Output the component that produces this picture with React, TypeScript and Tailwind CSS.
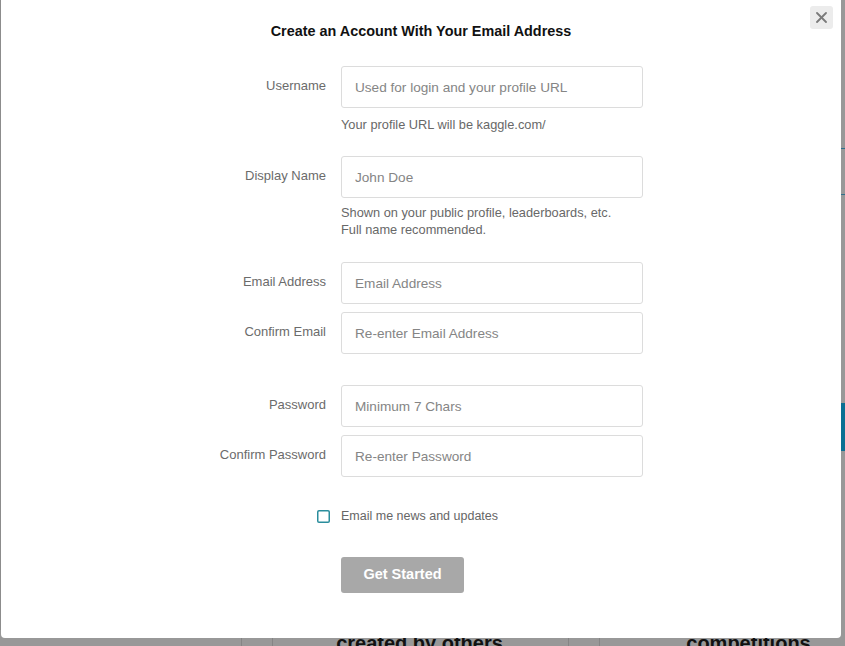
import React from 'react';

interface FieldProps {
  label: string;
  placeholder: string;
  type?: string;
  className?: string;
  help?: string[];
  helpClassName?: string;
}

const Field = ({ label, placeholder, type = 'text', className = '', help, helpClassName = '' }: FieldProps) => (
  <div className={className}>
    <div className="flex items-center gap-[15px]">
      <label className="w-[127px] shrink-0 pb-[3px] text-right text-[13px] leading-[17px] text-[#6b6b6b]">{label}</label>
      <input
        type={type}
        placeholder={placeholder}
        className="h-[42px] w-[302px] rounded-[3px] border border-[#dcdcdc] bg-white px-[13px] text-[13.6px] text-[#555] outline-none placeholder:text-[#858585]"
      />
    </div>
    {help && (
      <div className={`ml-[142px] text-[12.8px] leading-[17px] text-[#686868] ${helpClassName}`}>
        {help.map((line) => (
          <p key={line}>{line}</p>
        ))}
      </div>
    )}
  </div>
);

const CloseButton = () => (
  <button className="flex h-[23px] w-[23px] items-center justify-center rounded-[3px] bg-[#ececec]">
    <svg width="11" height="11" viewBox="0 0 11 11" fill="none" stroke="#7a7a7a" strokeWidth="1.8" strokeLinecap="round">
      <line x1="1" y1="1" x2="10" y2="10" />
      <line x1="10" y1="1" x2="1" y2="10" />
    </svg>
  </button>
);

// page behind the overlay, dimmed
const BackgroundPage = () => (
  <div className="flex h-full w-full flex-col bg-[#989898]">
    <div className="flex h-[630px] shrink-0 justify-between">
      <div className="flex w-px flex-col bg-[#8c8c8c]" />
      <div className="flex w-[4px] flex-col">
        <div className="mt-[148px] h-px bg-[#2f6f8c]" />
        <div className="mt-[45px] h-px bg-[#2f6f8c]" />
        <div className="mt-[208px] h-[48px] bg-[#0b6f93]" />
      </div>
    </div>
    <div className="flex h-[16px] shrink-0 overflow-hidden">
      <div className="ml-[241px] w-px shrink-0 bg-[#858585]" />
      <div className="ml-[30px] flex w-[297px] shrink-0 justify-center border-l border-r border-[#858585] pr-[2px]">
        <span className="mt-[1px] text-[20px] font-bold leading-[24px] text-[#111]">created by others</span>
      </div>
      <div className="ml-[30px] flex w-[298px] shrink-0 justify-center border-l border-[#858585]">
        <span className="mt-[1px] text-[20px] font-bold leading-[24px] text-[#111]">competitions</span>
      </div>
    </div>
  </div>
);

export default function App() {
  return (
    <div className="relative h-[646px] w-[845px] overflow-hidden font-['Liberation_Sans',Arial,sans-serif]">
      <BackgroundPage />

      <div className="absolute left-px top-0 flex h-[638px] w-[840px] flex-col items-center rounded-b-[4px] bg-white">
        <div className="absolute right-[8px] top-[6px]">
          <CloseButton />
        </div>

        <h1 className="mt-[23px] text-[14.4px] font-bold leading-[16px] text-[#111]">
          Create an Account With Your Email Address
        </h1>

        <form className="mt-[27px] flex w-[444px] flex-col" onSubmit={(e) => e.preventDefault()}>
          <Field
            label="Username"
            placeholder="Used for login and your profile URL"
            help={['Your profile URL will be kaggle.com/']}
            helpClassName="mt-[8px]"
          />
          <Field
            className="mt-[23px]"
            label="Display Name"
            placeholder="John Doe"
            help={['Shown on your public profile, leaderboards, etc.', 'Full name recommended.']}
            helpClassName="mt-[6px]"
          />
          <Field className="mt-[24px]" label="Email Address" placeholder="Email Address" type="email" />
          <Field className="mt-[8px]" label="Confirm Email" placeholder="Re-enter Email Address" type="email" />
          <Field className="mt-[31px]" label="Password" placeholder="Minimum 7 Chars" type="password" />
          <Field className="mt-[8px]" label="Confirm Password" placeholder="Re-enter Password" type="password" />

          <label className="mt-[31px] flex items-center">
            <span className="flex w-[127px] shrink-0 justify-end">
              <span className="-mr-[4px] block h-[13px] w-[13px] rounded-[2px] bg-white shadow-[inset_0_0_0_1.5px_#2a8d9c]" />
            </span>
            <span className="ml-[15px] text-[12.5px] leading-[17px] text-[#666]">Email me news and updates</span>
          </label>

          <div className="mt-[32px] pl-[142px]">
            <button
              type="submit"
              className="h-[36px] w-[123px] rounded-[3px] bg-[#a8a8a8] text-[14.5px] font-bold text-white"
            >
              Get Started
            </button>
          </div>
        </form>
      </div>
    </div>
  );
}
